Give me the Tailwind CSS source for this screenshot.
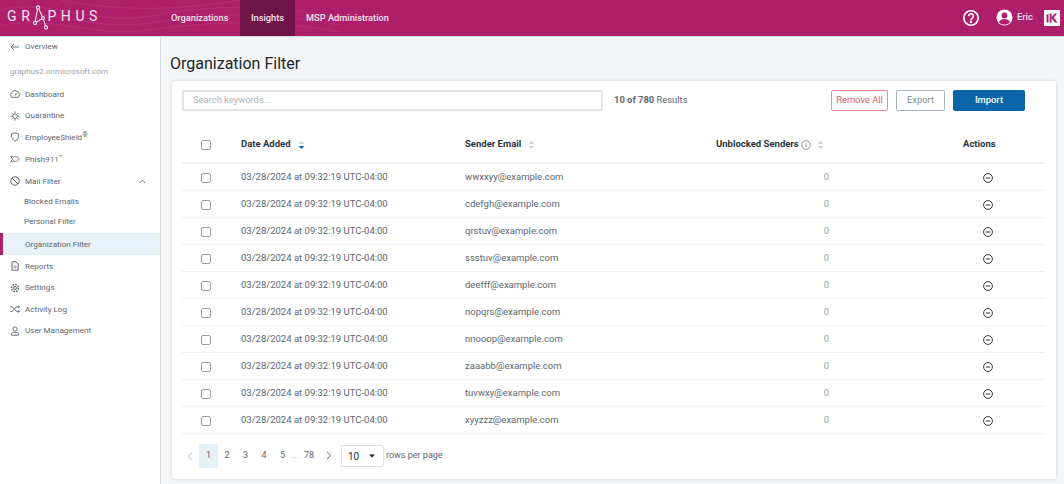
<!DOCTYPE html>
<html lang="en">
<head>
    <meta charset="UTF-8">
    <title>Organization Filter | Graphus</title>
    <script src="https://cdn.jsdelivr.net/npm/@tailwindcss/browser@4"></script>
</head>
<body class="w-[1064px] h-[484px] overflow-hidden bg-[#f4f5f7] font-['Roboto',sans-serif]">

    <!-- Header -->
    <header class="relative h-[37px] bg-[#ae1f6b] border-b border-[#d9d9de] flex items-center text-white overflow-hidden">
        <svg class="absolute left-0 top-0" width="340" height="36" fill="none" stroke="#c24a88" stroke-width="0.6" opacity="0.6">
            <path d="M0 10C50 -2 90 26 150 16S260 2 340 18"/>
            <path d="M0 18C50 6 90 32 150 23S260 10 340 25"/>
            <path d="M0 26C50 14 90 38 150 30S260 18 340 32"/>
            <path d="M60 0C110 10 170 12 240 0"/>
        </svg>
        <div class="relative w-[171px] pl-[7px] -mt-[3px] flex items-center text-[14px] text-[#f3e3ec] tracking-[4.6px]">
            <span>GR</span>
            <svg class="-ml-[3px] -mr-[1px] mt-[3px]" width="17" height="26" viewBox="0 0 17 26" fill="none" stroke="#f3e3ec" stroke-width="1.1">
                <circle cx="7" cy="2.500" r="1.600"/>
                <circle cx="4" cy="18" r="1.600"/>
                <circle cx="12" cy="13" r="1.400"/>
                <circle cx="15" cy="22.500" r="1.600"/>
                <path d="M6.500 4 4.300 16.400M7.800 4 11.500 11.700M5.400 17.200 10.800 13.800M12.500 14.400 14.600 21"/>
            </svg>
            <span>PHUS</span>
        </div>
        <nav class="relative flex h-full text-[9.25px] font-medium text-[#f6e6ef]">
            <a class="w-[69px] flex items-center">Organizations</a>
            <a class="w-[55px] flex items-center justify-center bg-[#701349]">Insights</a>
            <a class="pl-[11px] flex items-center">MSP Administration</a>
        </nav>
        <div class="ml-auto -mt-[1px] flex items-center">
            <svg width="18" height="18" viewBox="0 0 18 18" fill="none" stroke="white" stroke-width="1.6">
                <circle cx="9" cy="9" r="7.200"/>
                <path d="M6.600 7.200a2.400 2.400 0 1 1 3.700 2c-.9.600-1.300 1-1.300 2"/>
                <circle cx="9" cy="13" r=".5" fill="white"/>
            </svg>
            <svg class="ml-[16px]" width="17" height="17" viewBox="0 0 17 17">
                <circle cx="8.500" cy="8.500" r="8" fill="white"/>
                <circle cx="8.500" cy="6.400" r="2.900" fill="#ae1f6b"/>
                <path d="M2.900 13.200c1-2.400 3.400-3.200 5.600-3.200s4.600.8 5.600 3.200c-1.400 1.500-3.400 2.400-5.600 2.400s-4.200-.9-5.600-2.400z" fill="#ae1f6b"/>
            </svg>
            <span class="ml-[4px] text-[9.500px] font-medium text-[#f3dfe9]">Eric</span>
            <div class="ml-[11px] mr-[4px] w-[16px] h-[16px] bg-white flex items-center justify-center">
                <svg width="12" height="10" viewBox="0 0 12 10" fill="#ae1f6b">
                    <path d="M0 2.500 2.500 0.500V9.500H0.600V3.400ZM3.600 0.500H5.600V4.200L8.600 0.500H11.200L7.800 4.600 11.600 9.500H9L5.600 5.200V9.500H3.600Z"/>
                </svg>
            </div>
        </div>
    </header>

    <div class="flex h-[447px]">

        <!-- Sidebar -->
        <aside class="w-[161px] shrink-0 bg-white border-r border-[#d9dadd] text-[8.100px] text-[#5c6670]">
            <div class="h-[19px] flex items-center pl-[10px] gap-[6px]">
                <svg width="9" height="8" viewBox="0 0 9 8" fill="none" stroke="#5c6670" stroke-width="0.9"><path d="M9 4H1M4 1 1 4l3 3"/></svg>
                <span>Overview</span>
            </div>
            <div class="h-[27px] flex items-center pl-[10px] pt-[3px] text-[#9a9fa5]">graphus2.onmicrosoft.com</div>

            <a class="h-[22px] flex items-center pl-[10px] gap-[5px]">
                <svg width="10" height="10" viewBox="0 0 10 10" fill="none" stroke="#5c6670" stroke-width="0.9"><path d="M1.400 8.300a4.300 4.300 0 1 1 7.200 0z"/><path d="M5 6.600 6.600 4"/></svg>
                <span>Dashboard</span>
            </a>
            <a class="h-[21px] flex items-center pl-[10px] gap-[5px]">
                <svg width="10" height="10" viewBox="0 0 10 10" fill="none" stroke="#5c6670" stroke-width="0.8"><circle cx="5" cy="5.200" r="2.300"/><path d="M5 .4v2.400M5 7.600V9.800M.4 5.200h2.300M7.300 5.200h2.300M1.600 1.800 3.300 3.500M8.400 1.800 6.700 3.500M1.600 8.600 3.300 6.900M8.400 8.600 6.700 6.900"/></svg>
                <span>Quarantine</span>
            </a>
            <a class="h-[22px] flex items-center pl-[10px] gap-[5px]">
                <svg width="10" height="10" viewBox="0 0 10 10" fill="none" stroke="#5c6670" stroke-width="0.9"><path d="M5 .8 8.800 2c0 3.400-1 5.800-3.800 7.200C2.200 7.800 1.200 5.400 1.200 2z"/></svg>
                <span>EmployeeShield<sup class="text-[7px] -top-[3px]">®</sup></span>
            </a>
            <a class="h-[22px] flex items-center pl-[10px] gap-[5px]">
                <svg width="10" height="10" viewBox="0 0 10 10" fill="none" stroke="#5c6670" stroke-width="0.9"><path d="M.6 2.200 2.600 5 .6 7.800c1.600 0 2.400-.7 3.200-1 1.400 1 3.400 1 5.600-1.800C7.200 2.200 5.200 2.200 3.800 3.200c-.8-.4-1.600-1-3.200-1z"/></svg>
                <span>Phish911<sup class="text-[6px] -top-[3px]">™</sup></span>
            </a>
            <a class="h-[22px] flex items-center pl-[10px] gap-[5px]">
                <svg width="10" height="10" viewBox="0 0 10 10" fill="none" stroke="#5c6670" stroke-width="1"><circle cx="5" cy="5" r="4.200"/><path d="M2 2 8 8"/></svg>
                <span>Mail Filter</span>
                <svg class="ml-auto mr-[14px]" width="7" height="5" viewBox="0 0 7 5" fill="none" stroke="#5c6670" stroke-width="0.9"><path d="M.8 4 3.500 1.200 6.200 4"/></svg>
            </a>
            <a class="h-[19px] flex items-center pl-[24px]">Blocked Emails</a>
            <a class="h-[22px] flex items-center pl-[24px] pb-[1px]">Personal Filter</a>
            <a class="relative h-[22px] flex items-center pl-[25px] bg-[#e8f1f7]">
                <span class="absolute left-0 top-0 h-full w-[3px] bg-[#ae1f6b]"></span>
                Organization Filter
            </a>
            <a class="h-[22px] flex items-center pl-[10px] gap-[5px]">
                <svg width="10" height="10" viewBox="0 0 10 10" fill="none" stroke="#5c6670" stroke-width="1"><path d="M2 .8h4L8.200 3v6.200H2z"/><path d="M3.600 6.600h3M3.600 5h3" stroke-width="0.8"/></svg>
                <span>Reports</span>
            </a>
            <a class="h-[21px] flex items-center pl-[10px] gap-[5px]">
                <svg width="10" height="10" viewBox="0 0 10 10" fill="none" stroke="#5c6670"><circle cx="5" cy="5" r="1.500"/><circle cx="5" cy="5" r="3.500" stroke-width="1.500" stroke-dasharray="1.700 1"/></svg>
                <span>Settings</span>
            </a>
            <a class="h-[22px] flex items-center pl-[10px] gap-[5px]">
                <svg width="10" height="10" viewBox="0 0 10 10" fill="none" stroke="#5c6670" stroke-width="0.9"><path d="M.4 2.800h2l4 4.600h2.800M.4 7.400h2l4-4.600h2.800M8 1.400l1.400 1.400L8 4.200M8 6l1.400 1.400L8 8.800"/></svg>
                <span>Activity Log</span>
            </a>
            <a class="h-[21px] flex items-center pl-[10px] gap-[5px]">
                <svg width="10" height="10" viewBox="0 0 10 10" fill="none" stroke="#5c6670" stroke-width="0.9"><circle cx="5" cy="3" r="2.100"/><path d="M1.400 9.200V8c0-1 1-1.600 2-1.600h3.200c1 0 2 .6 2 1.600v1.200z"/></svg>
                <span>User Management</span>
            </a>
        </aside>

        <!-- Main -->
        <main class="flex-1 pl-[11px] pr-[8px]">
            <h1 class="h-[44px] pt-[17px] -ml-[2px] text-[16px] leading-[20px] text-[#20262c]">Organization Filter</h1>

            <section class="h-[398px] bg-white rounded-[3px] shadow-[0_0_3px_rgba(0,0,0,0.18)] pl-[10px] pr-[11px] pt-[9px]">
                <!-- Toolbar -->
                <div class="flex items-center h-[21px] pr-[20px] text-[9.400px]">
                    <div class="w-[421px] h-[21px] border-2 border-[#e3e4e6] rounded-[2px] flex items-center pl-[9px] text-[#aeb2b7]">Search keywords...</div>
                    <div class="ml-[11px] text-[#5c6670]"><span class="font-bold">10 of 780</span> Results</div>
                    <button class="ml-auto w-[57px] h-[21px] border border-[#ec8b90] rounded-[2px] text-[#dd5f66]">Remove All</button>
                    <button class="ml-[8px] w-[49px] h-[21px] border border-[#a9b2bd] rounded-[2px] text-[#7d8b99]">Export</button>
                    <button class="ml-[8px] w-[72px] h-[21px] bg-[#0a66a8] rounded-[2px] font-medium text-white">Import</button>
                </div>

                <!-- Table -->
                <div class="text-[9.500px] text-[#5c6670]">
                    <div class="h-[53px] pt-[16px] flex items-center border-b-2 border-[#f1f2f3] font-bold text-[#2a3540]">
                        <div class="w-[59px] pl-[19px]"><span class="block w-[10px] h-[10px] border border-[#9a9fa5] rounded-[2px]"></span></div>
                        <div class="w-[224px] flex items-center gap-[7px]">Date Added
                            <svg width="7" height="10" viewBox="0 0 7 10"><path d="M3.500 1 6.500 4H.5z" fill="#cfd2d6"/><path d="M3.500 9 6.500 6H.5z" fill="#0a66a8"/></svg>
                        </div>
                        <div class="w-[251px] flex items-center gap-[7px]">Sender Email
                            <svg width="7" height="10" viewBox="0 0 7 10" fill="#cfd2d6"><path d="M3.500 1 6.500 4H.5zM3.500 9 6.500 6H.5z"/></svg>
                        </div>
                        <div class="w-[247px] flex items-center">Unblocked Senders
                            <svg class="ml-[2px]" width="10" height="10" viewBox="0 0 10 10" fill="none" stroke="#5c6670" stroke-width="0.7"><circle cx="5" cy="5" r="4.300"/><path d="M5 4.400v3M5 2.600v1"/></svg>
                            <svg class="ml-[6px]" width="7" height="10" viewBox="0 0 7 10" fill="#cfd2d6" stroke="none"><path d="M3.500 1 6.500 4H.5zM3.500 9 6.500 6H.5z"/></svg>
                        </div>
                        <div>Actions</div>
                    </div>

                    <div class="h-[27px] flex items-center border-b border-[#eeeff0] pt-[1px]">
                        <div class="w-[59px] pl-[19px]"><span class="block w-[10px] h-[10px] border border-[#9a9fa5] rounded-[2px]"></span></div>
                        <div class="w-[224px]">03/28/2024 at 09:32:19 UTC-04:00</div>
                        <div class="w-[251px]">wwxxyy@example.com</div>
                        <div class="w-[113px] text-right text-[#9a9fa5]">0</div>
                        <div class="ml-[154px]"><svg class="block" width="10" height="10" viewBox="0 0 10 10" fill="none" stroke="#2a3540"><circle cx="5" cy="5" r="4.400"/><path d="M2.800 5h4.400"/></svg></div>
                    </div>
                    <div class="h-[27px] flex items-center border-b border-[#eeeff0] pt-[1px]">
                        <div class="w-[59px] pl-[19px]"><span class="block w-[10px] h-[10px] border border-[#9a9fa5] rounded-[2px]"></span></div>
                        <div class="w-[224px]">03/28/2024 at 09:32:19 UTC-04:00</div>
                        <div class="w-[251px]">cdefgh@example.com</div>
                        <div class="w-[113px] text-right text-[#9a9fa5]">0</div>
                        <div class="ml-[154px]"><svg class="block" width="10" height="10" viewBox="0 0 10 10" fill="none" stroke="#2a3540"><circle cx="5" cy="5" r="4.400"/><path d="M2.800 5h4.400"/></svg></div>
                    </div>
                    <div class="h-[27px] flex items-center border-b border-[#eeeff0] pt-[1px]">
                        <div class="w-[59px] pl-[19px]"><span class="block w-[10px] h-[10px] border border-[#9a9fa5] rounded-[2px]"></span></div>
                        <div class="w-[224px]">03/28/2024 at 09:32:19 UTC-04:00</div>
                        <div class="w-[251px]">qrstuv@example.com</div>
                        <div class="w-[113px] text-right text-[#9a9fa5]">0</div>
                        <div class="ml-[154px]"><svg class="block" width="10" height="10" viewBox="0 0 10 10" fill="none" stroke="#2a3540"><circle cx="5" cy="5" r="4.400"/><path d="M2.800 5h4.400"/></svg></div>
                    </div>
                    <div class="h-[27px] flex items-center border-b border-[#eeeff0] pt-[1px]">
                        <div class="w-[59px] pl-[19px]"><span class="block w-[10px] h-[10px] border border-[#9a9fa5] rounded-[2px]"></span></div>
                        <div class="w-[224px]">03/28/2024 at 09:32:19 UTC-04:00</div>
                        <div class="w-[251px]">ssstuv@example.com</div>
                        <div class="w-[113px] text-right text-[#9a9fa5]">0</div>
                        <div class="ml-[154px]"><svg class="block" width="10" height="10" viewBox="0 0 10 10" fill="none" stroke="#2a3540"><circle cx="5" cy="5" r="4.400"/><path d="M2.800 5h4.400"/></svg></div>
                    </div>
                    <div class="h-[27px] flex items-center border-b border-[#eeeff0] pt-[1px]">
                        <div class="w-[59px] pl-[19px]"><span class="block w-[10px] h-[10px] border border-[#9a9fa5] rounded-[2px]"></span></div>
                        <div class="w-[224px]">03/28/2024 at 09:32:19 UTC-04:00</div>
                        <div class="w-[251px]">deefff@example.com</div>
                        <div class="w-[113px] text-right text-[#9a9fa5]">0</div>
                        <div class="ml-[154px]"><svg class="block" width="10" height="10" viewBox="0 0 10 10" fill="none" stroke="#2a3540"><circle cx="5" cy="5" r="4.400"/><path d="M2.800 5h4.400"/></svg></div>
                    </div>
                    <div class="h-[27px] flex items-center border-b border-[#eeeff0] pt-[1px]">
                        <div class="w-[59px] pl-[19px]"><span class="block w-[10px] h-[10px] border border-[#9a9fa5] rounded-[2px]"></span></div>
                        <div class="w-[224px]">03/28/2024 at 09:32:19 UTC-04:00</div>
                        <div class="w-[251px]">nopqrs@example.com</div>
                        <div class="w-[113px] text-right text-[#9a9fa5]">0</div>
                        <div class="ml-[154px]"><svg class="block" width="10" height="10" viewBox="0 0 10 10" fill="none" stroke="#2a3540"><circle cx="5" cy="5" r="4.400"/><path d="M2.800 5h4.400"/></svg></div>
                    </div>
                    <div class="h-[27px] flex items-center border-b border-[#eeeff0] pt-[1px]">
                        <div class="w-[59px] pl-[19px]"><span class="block w-[10px] h-[10px] border border-[#9a9fa5] rounded-[2px]"></span></div>
                        <div class="w-[224px]">03/28/2024 at 09:32:19 UTC-04:00</div>
                        <div class="w-[251px]">nnooop@example.com</div>
                        <div class="w-[113px] text-right text-[#9a9fa5]">0</div>
                        <div class="ml-[154px]"><svg class="block" width="10" height="10" viewBox="0 0 10 10" fill="none" stroke="#2a3540"><circle cx="5" cy="5" r="4.400"/><path d="M2.800 5h4.400"/></svg></div>
                    </div>
                    <div class="h-[27px] flex items-center border-b border-[#eeeff0] pt-[1px]">
                        <div class="w-[59px] pl-[19px]"><span class="block w-[10px] h-[10px] border border-[#9a9fa5] rounded-[2px]"></span></div>
                        <div class="w-[224px]">03/28/2024 at 09:32:19 UTC-04:00</div>
                        <div class="w-[251px]">zaaabb@example.com</div>
                        <div class="w-[113px] text-right text-[#9a9fa5]">0</div>
                        <div class="ml-[154px]"><svg class="block" width="10" height="10" viewBox="0 0 10 10" fill="none" stroke="#2a3540"><circle cx="5" cy="5" r="4.400"/><path d="M2.800 5h4.400"/></svg></div>
                    </div>
                    <div class="h-[27px] flex items-center border-b border-[#eeeff0] pt-[1px]">
                        <div class="w-[59px] pl-[19px]"><span class="block w-[10px] h-[10px] border border-[#9a9fa5] rounded-[2px]"></span></div>
                        <div class="w-[224px]">03/28/2024 at 09:32:19 UTC-04:00</div>
                        <div class="w-[251px]">tuvwxy@example.com</div>
                        <div class="w-[113px] text-right text-[#9a9fa5]">0</div>
                        <div class="ml-[154px]"><svg class="block" width="10" height="10" viewBox="0 0 10 10" fill="none" stroke="#2a3540"><circle cx="5" cy="5" r="4.400"/><path d="M2.800 5h4.400"/></svg></div>
                    </div>
                    <div class="h-[27px] flex items-center border-b border-[#eeeff0] pt-[1px]">
                        <div class="w-[59px] pl-[19px]"><span class="block w-[10px] h-[10px] border border-[#9a9fa5] rounded-[2px]"></span></div>
                        <div class="w-[224px]">03/28/2024 at 09:32:19 UTC-04:00</div>
                        <div class="w-[251px]">xyyzzz@example.com</div>
                        <div class="w-[113px] text-right text-[#9a9fa5]">0</div>
                        <div class="ml-[154px]"><svg class="block" width="10" height="10" viewBox="0 0 10 10" fill="none" stroke="#2a3540"><circle cx="5" cy="5" r="4.400"/><path d="M2.800 5h4.400"/></svg></div>
                    </div>
                </div>

                <!-- Pagination -->
                <div class="mt-[10px] h-[24px] flex items-center text-[9px] text-[#5c6670]">
                    <svg class="ml-[5px]" width="6" height="9" viewBox="0 0 6 9" fill="none" stroke="#b6babf"><path d="M5 .8 1.200 4.500 5 8.200"/></svg>
                    <span class="ml-[6px] w-[19px] h-[24px] flex items-center justify-center bg-[#e6f0f7]">1</span>
                    <span class="w-[18px] text-center">2</span>
                    <span class="w-[19px] text-center">3</span>
                    <span class="w-[18px] text-center">4</span>
                    <span class="w-[19px] text-center">5</span>
                    <span class="w-[6px] text-[#9a9fa5]">...</span>
                    <span class="w-[22px] text-center">78</span>
                    <svg class="ml-[6px] -mt-[2px]" width="6" height="9" viewBox="0 0 6 9" fill="none" stroke="#5c6670"><path d="M1 .8 4.800 4.500 1 8.200"/></svg>
                    <div class="ml-[9px] w-[43px] h-[22px] border border-[#dfe1e3] rounded-[2px] flex items-center justify-between pl-[6px] pr-[8px] text-[10px] text-[#2a3540]">
                        10
                        <svg width="6" height="4" viewBox="0 0 6 4" fill="#20262c"><path d="M0 .5h6L3 3.500z"/></svg>
                    </div>
                    <span class="ml-[2px]">rows per page</span>
                </div>
            </section>
        </main>
    </div>
</body>
</html>
